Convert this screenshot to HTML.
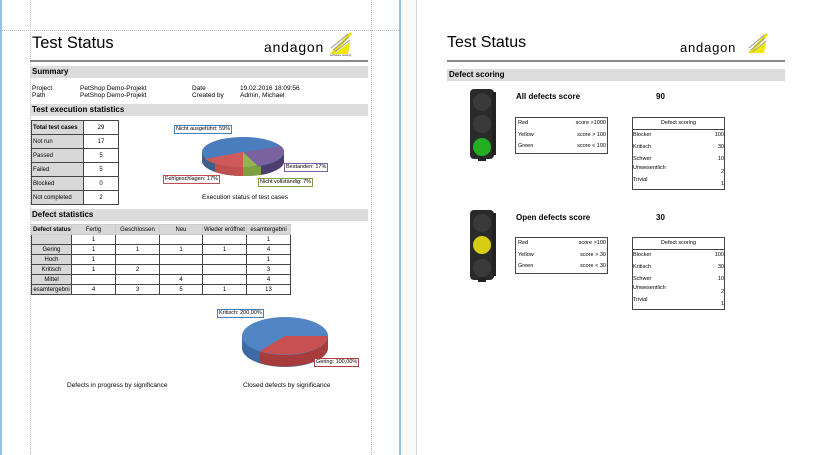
<!DOCTYPE html>
<html><head><meta charset="utf-8"><style>
*{margin:0;padding:0;box-sizing:border-box}
body{width:818px;height:455px;overflow:hidden;background:#fff;font-family:"Liberation Sans",Arial,sans-serif;position:relative;color:#000}
.a{position:absolute;white-space:nowrap}
.bar{position:absolute;background:#dcdcdc;font-weight:bold;font-size:8px;padding-left:2px;line-height:12px}
.t{font-size:6.5px}
table{border-collapse:collapse;position:absolute;font-size:6px;table-layout:fixed}
td{border:1px solid #444;padding:0 1px;white-space:nowrap;overflow:hidden}
.g{background:#d8d8d8}
.lab{position:absolute;font-size:5.5px;background:#fff;padding:0 1px;line-height:7px;white-space:nowrap}
</style></head><body>
<div class="a" style="left:0;top:0;width:2px;height:455px;background:#8fc3ea"></div>
<div class="a" style="left:399px;top:0;width:2px;height:455px;background:#8fc3ea"></div>
<div class="a" style="left:401px;top:0;width:16px;height:455px;background:#fafafa"></div>
<div class="a" style="left:416px;top:0;width:1px;height:455px;background:#d8d8d8"></div>
<div class="a" style="left:30px;top:0;width:0;height:455px;border-left:1px dotted #bbb"></div>
<div class="a" style="left:371px;top:0;width:0;height:455px;border-left:1px dotted #bbb"></div>
<div class="a" style="left:2px;top:30px;width:397px;height:0;border-top:1px dotted #bbb"></div>

<div class="a" style="left:32px;top:34px;font-size:16.5px">Test Status</div>
<div class="a" style="left:264px;top:39px;font-size:14px;letter-spacing:0.8px">andagon</div>
<svg class="a" style="left:328px;top:30px" width="24" height="27"><path d="M2 24 L22 2 L24 4 L6 24Z" fill="#e8e000"/><path d="M3 18 L20 4 M5 20 L21 7 M7 22 L22 10" stroke="#999" stroke-width="1"/><path d="M6 24 L22 12 L20 24Z" fill="#f0e800"/></svg>
<div class="a" style="left:330px;top:53px;font-size:3px;color:#333">software testing</div>
<div class="a" style="left:30px;top:60px;width:338px;height:2px;background:#888"></div>

<div class="bar" style="left:30px;top:66px;width:338px">Summary</div>
<div class="a t" style="left:32px;top:85px">Project</div>
<div class="a t" style="left:32px;top:92px">Path</div>
<div class="a t" style="left:80px;top:85px">PetShop Demo-Projekt</div>
<div class="a t" style="left:80px;top:92px">PetShop Demo-Projekt</div>
<div class="a t" style="left:192px;top:85px">Date</div>
<div class="a t" style="left:192px;top:92px">Created by</div>
<div class="a t" style="left:240px;top:85px">19.02.2016 18:09:56</div>
<div class="a t" style="left:240px;top:92px">Admin, Michael</div>

<div class="bar" style="left:30px;top:104px;width:338px">Test execution statistics</div>
<table style="left:31px;top:120px;width:88px">
<tr style="height:14px"><td class="g" style="font-weight:bold;width:52px">Total test cases</td><td style="text-align:center">29</td></tr>
<tr style="height:14px"><td class="g">Not run</td><td style="text-align:center">17</td></tr>
<tr style="height:14px"><td class="g">Passed</td><td style="text-align:center">5</td></tr>
<tr style="height:14px"><td class="g">Failed</td><td style="text-align:center">5</td></tr>
<tr style="height:14px"><td class="g">Blocked</td><td style="text-align:center">0</td></tr>
<tr style="height:14px"><td class="g">Not completed</td><td style="text-align:center">2</td></tr>
</table>

<svg class="a" style="left:195px;top:130px" width="100" height="60">
<path d="M7 22 L7 31 A41 15 0 0 0 89 31 L89 22Z" fill="#3c5f8c"/>
<path d="M20 33 A41 15 0 0 0 48 37 L48 46 A41 15 0 0 1 20 42Z" fill="#c05050"/>
<path d="M48 37 A41 15 0 0 0 66 36 L66 45 A41 15 0 0 1 48 46Z" fill="#7ea040"/>
<path d="M66 36 A41 15 0 0 0 89 22 L89 31 A41 15 0 0 1 66 45Z" fill="#4e3e70"/>
<ellipse cx="48" cy="22" rx="41" ry="15" fill="#4a7dbd"/>
<path d="M48 22 L10 29 A41 15 0 0 0 48 37Z" fill="#cf5a5a"/>
<path d="M48 22 L48 37 A41 15 0 0 0 63 36Z" fill="#93b54f"/>
<path d="M48 22 L63 36 A41 15 0 0 0 89 22 A41 15 0 0 0 86 16Z" fill="#7a62a0"/>
</svg>
<div class="lab" style="left:174px;top:125px;border:1px solid #4a7dbd">Nicht ausgeführt: 59%</div>
<div class="lab" style="left:284px;top:163px;border:1px solid #7a62a0">Bestanden: 17%</div>
<div class="lab" style="left:163px;top:175px;border:1px solid #c05050">Fehlgeschlagen: 17%</div>
<div class="lab" style="left:258px;top:178px;border:1px solid #7ea040">Nicht vollständig: 7%</div>
<div class="a" style="left:202px;top:194px;font-size:6.5px">Execution status of test cases</div>

<div class="bar" style="left:30px;top:209px;width:338px">Defect statistics</div>
<table style="left:31px;top:224px;width:259px;text-align:center">
<colgroup><col style="width:40px"><col style="width:44px"><col style="width:44px"><col style="width:43px"><col style="width:44px"><col style="width:44px"></colgroup>
<tr style="height:10px" class="g"><td style="font-weight:bold;border-color:#ccc">Defect status</td><td style="border-color:#ccc">Fertig</td><td style="border-color:#ccc">Geschlossen</td><td style="border-color:#ccc">Neu</td><td style="border-color:#ccc">Wieder eröffnet</td><td style="border-color:#ccc">esamtergebni</td></tr>
<tr style="height:10px"><td class="g"></td><td>1</td><td></td><td></td><td></td><td>1</td></tr>
<tr style="height:10px"><td class="g">Gering</td><td>1</td><td>1</td><td>1</td><td>1</td><td>4</td></tr>
<tr style="height:10px"><td class="g">Hoch</td><td>1</td><td></td><td></td><td></td><td>1</td></tr>
<tr style="height:10px"><td class="g">Kritisch</td><td>1</td><td>2</td><td></td><td></td><td>3</td></tr>
<tr style="height:10px"><td class="g">Mittel</td><td></td><td></td><td>4</td><td></td><td>4</td></tr>
<tr style="height:10px"><td class="g">esamtergebni</td><td>4</td><td>3</td><td>5</td><td>1</td><td>13</td></tr>
</table>

<svg class="a" style="left:240px;top:312px" width="92" height="62">
<path d="M2 24 L2 36 A43 19 0 0 0 88 36 L88 24Z" fill="#3d6aa5"/>
<path d="M20 39 A43 19 0 0 0 88 24 L88 36 A43 19 0 0 1 20 51Z" fill="#a83c3c"/>
<ellipse cx="45" cy="24" rx="43" ry="19" fill="#5285c5"/>
<path d="M45 24 L88 24 A43 19 0 0 1 20 39Z" fill="#c85050"/>
</svg>
<div class="lab" style="left:217px;top:309px;border:1px solid #4a7dbd">Kritisch: 200,00%</div>
<div class="lab" style="left:314px;top:358px;border:1px solid #b04040">Gering: 100,00%</div>
<div class="a" style="left:67px;top:382px;font-size:6.5px">Defects in progress by significance</div>
<div class="a" style="left:243px;top:382px;font-size:6.5px">Closed defects by significance</div>

<div class="a" style="left:447px;top:34px;font-size:16px">Test Status</div>
<div class="a" style="left:680px;top:40px;font-size:13px;letter-spacing:0.8px">andagon</div>
<svg class="a" style="left:746px;top:31px" width="22" height="24"><path d="M2 22 L20 2 L22 4 L6 22Z" fill="#e8e000"/><path d="M3 17 L18 4 M5 19 L19 7 M7 21 L20 10" stroke="#999" stroke-width="1"/><path d="M6 22 L20 11 L18 22Z" fill="#f0e800"/></svg>
<div class="a" style="left:447px;top:60px;width:338px;height:2px;background:#888"></div>
<div class="bar" style="left:447px;top:69px;width:338px">Defect scoring</div>

<div class="a" style="left:470px;top:89px;width:24px;height:70px;background:#2a2a2a;border-radius:4px"></div>
<div class="a" style="left:492px;top:92px;width:4px;height:63px;background:#222"></div>
<div class="a" style="left:478px;top:157px;width:8px;height:4px;background:#222"></div>
<div class="a" style="left:473px;top:93px;width:18px;height:18px;border-radius:50%;background:#3a3a3a"></div>
<div class="a" style="left:473px;top:115px;width:18px;height:18px;border-radius:50%;background:#3a3a3a"></div>
<div class="a" style="left:473px;top:138px;width:18px;height:18px;border-radius:50%;background:#22b022"></div>
<div class="a" style="left:516px;top:92px;font-size:8px;font-weight:bold">All defects score</div>
<div class="a" style="left:656px;top:92px;font-size:8px;font-weight:bold">90</div>
<div class="a" style="left:515px;top:117px;width:93px;height:37px;border:1px solid #444;font-size:5.5px">
<div class="a" style="left:2px;top:2px">Red</div><div class="a" style="right:1px;top:2px">score &gt;1000</div>
<div class="a" style="left:2px;top:14px">Yellow</div><div class="a" style="right:1px;top:14px">score &gt; 100</div>
<div class="a" style="left:2px;top:25px">Green</div><div class="a" style="right:1px;top:25px">score &lt; 100</div></div>
<div class="a" style="left:632px;top:117px;width:93px;height:73px;border:1px solid #444;font-size:5.5px">
<div style="border-bottom:1px solid #444;height:12px;text-align:center;line-height:11px">Defect scoring</div>
<div class="a" style="left:0;top:14px">Blocker</div><div class="a" style="right:0;top:14px">100</div>
<div class="a" style="left:0;top:26px">Kritisch</div><div class="a" style="right:0;top:26px">30</div>
<div class="a" style="left:0;top:38px">Schwer</div><div class="a" style="right:0;top:38px">10</div>
<div class="a" style="left:0;top:47px">Unwesentlich</div><div class="a" style="right:0;top:51px">2</div>
<div class="a" style="left:0;top:59px">Trivial</div><div class="a" style="right:0;top:63px">1</div></div>

<div class="a" style="left:470px;top:210px;width:24px;height:70px;background:#2a2a2a;border-radius:4px"></div>
<div class="a" style="left:492px;top:213px;width:4px;height:63px;background:#222"></div>
<div class="a" style="left:478px;top:278px;width:8px;height:4px;background:#222"></div>
<div class="a" style="left:473px;top:214px;width:18px;height:18px;border-radius:50%;background:#3a3a3a"></div>
<div class="a" style="left:473px;top:236px;width:18px;height:18px;border-radius:50%;background:#d8cc10"></div>
<div class="a" style="left:473px;top:259px;width:18px;height:18px;border-radius:50%;background:#3a3a3a"></div>
<div class="a" style="left:516px;top:213px;font-size:8px;font-weight:bold">Open defects score</div>
<div class="a" style="left:656px;top:213px;font-size:8px;font-weight:bold">30</div>
<div class="a" style="left:515px;top:237px;width:93px;height:37px;border:1px solid #444;font-size:5.5px">
<div class="a" style="left:2px;top:2px">Red</div><div class="a" style="right:1px;top:2px">score &gt;100</div>
<div class="a" style="left:2px;top:14px">Yellow</div><div class="a" style="right:1px;top:14px">score &gt; 30</div>
<div class="a" style="left:2px;top:25px">Green</div><div class="a" style="right:1px;top:25px">score &lt; 30</div></div>
<div class="a" style="left:632px;top:237px;width:93px;height:73px;border:1px solid #444;font-size:5.5px">
<div style="border-bottom:1px solid #444;height:12px;text-align:center;line-height:11px">Defect scoring</div>
<div class="a" style="left:0;top:14px">Blocker</div><div class="a" style="right:0;top:14px">100</div>
<div class="a" style="left:0;top:26px">Kritisch</div><div class="a" style="right:0;top:26px">30</div>
<div class="a" style="left:0;top:38px">Schwer</div><div class="a" style="right:0;top:38px">10</div>
<div class="a" style="left:0;top:47px">Unwesentlich</div><div class="a" style="right:0;top:51px">2</div>
<div class="a" style="left:0;top:59px">Trivial</div><div class="a" style="right:0;top:63px">1</div></div>
</body></html>
